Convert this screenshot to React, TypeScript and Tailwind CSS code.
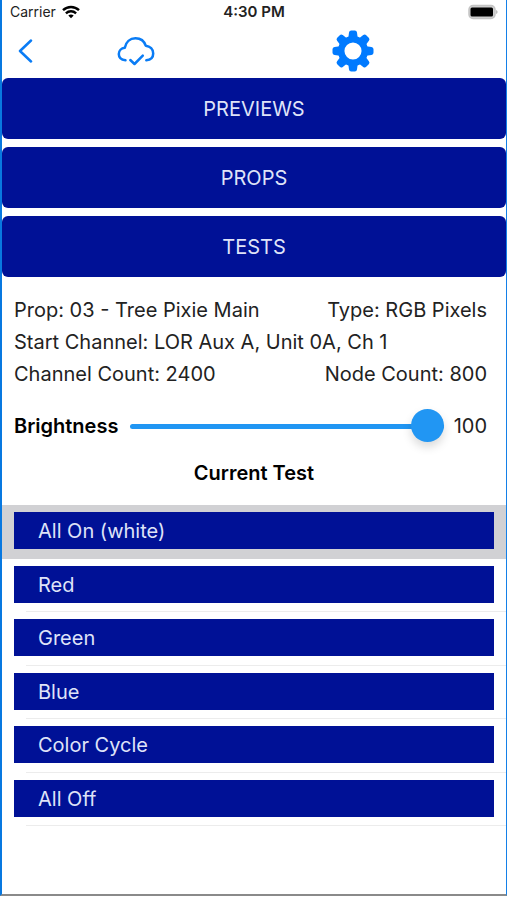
import { useState } from "react";

const menu = ["PREVIEWS", "PROPS", "TESTS"];
const tests = ["All On (white)", "Red", "Green", "Blue", "Color Cycle", "All Off"];

function StatusBar() {
  return (
    <div className="grid h-6 grid-cols-3 items-center pr-2 pl-2 text-[#222]">
      <div className="flex items-center gap-1.5 text-sm">
        Carrier
        <svg viewBox="0 0 18 14" className="h-3.5 w-[18px]" fill="none" stroke="#000" strokeWidth="2.4" aria-hidden="true">
          <path d="M1 5.2C5.500.9 12.500.9 17 5.200" />
          <path d="M3.900 8.300c2.900-2.700 7.300-2.700 10.200 0" />
          <path d="M6.300 10.500c1.600-1.500 3.800-1.500 5.400 0L9 13.300z" fill="#000" stroke="none" />
        </svg>
      </div>
      <div className="text-center text-[15px] font-semibold">4:30 PM</div>
      <svg viewBox="0 0 30 16" className="h-4 w-[30px] justify-self-end" aria-hidden="true">
        <rect x="1" y="1.500" width="26" height="13" rx="4" fill="#d0d0d0" stroke="#c4c4c4" strokeWidth="1.500" />
        <rect x="2.500" y="3.500" width="22.500" height="9" rx="1.500" fill="#000" />
        <path d="M28.200 6v4c1.800-.8 1.800-3.200 0-4z" fill="#b0b0b0" />
      </svg>
    </div>
  );
}

function CloudCheckIcon() {
  return (
    <svg viewBox="0 0 38 30" className="h-[30px] w-[38px]" fill="none" stroke="currentColor" strokeWidth="2.500" strokeLinecap="round" strokeLinejoin="round" aria-hidden="true">
      <path d="M8.500 24.300C4.500 23.800 1.800 21.500 1.800 18c0-3.400 2.500-5.800 6-6.200C8.800 6 13 2.200 18.500 2.200c5 0 8.800 2.900 10.200 7.500 4.500.5 7.500 3.600 7.500 7.700 0 3.800-2.700 6.400-6.900 6.900" />
      <path d="M13.300 24l4.200 4 8.300-8.300" />
    </svg>
  );
}

function GearIcon() {
  return (
    <svg viewBox="-21 -21 42 42" className="size-[42px]" fill="currentColor" aria-hidden="true">
      {[0, 45, 90, 135].map((angle) => (
        <path
          key={angle}
          transform={`rotate(${angle})`}
          d="M-4-18.500Q-3.700-20.500-1.800-20.500H1.800Q3.700-20.500 4-18.500L4.700-13H-4.700zM-4 18.500Q-3.700 20.500-1.800 20.500H1.800Q3.700 20.500 4 18.500L4.700 13H-4.700z"
        />
      ))}
      <circle r="11.800" fill="none" stroke="currentColor" strokeWidth="6.500" />
    </svg>
  );
}

export default function App() {
  const [brightness, setBrightness] = useState(100);
  const [current, setCurrent] = useState(tests[0]);

  return (
    <div className="min-h-screen bg-white pb-1 font-['Inter','Liberation_Sans',sans-serif] text-[#222]">
      <main className="border-r border-b-2 border-l-2 border-r-[#1480e8] border-b-[#8a8a8a] border-l-[#0878e0] pb-17">
        <StatusBar />

        <header className="grid h-[53px] grid-cols-[15px_1fr_1fr_1fr] items-center pl-4 text-[#0a7cf5]">
          <button type="button" aria-label="Back">
            <svg viewBox="0 0 15 24" className="h-6 w-[15px]" fill="none" stroke="currentColor" strokeWidth="2.500" strokeLinecap="round" strokeLinejoin="round" aria-hidden="true">
              <path d="M13 1.500L2 12l11 10.500" />
            </svg>
          </button>
          <button type="button" aria-label="Sync" className="ml-12 justify-self-center">
            <CloudCheckIcon />
          </button>
          <button type="button" aria-label="Settings" className="col-start-3 col-end-5 ml-2.5 justify-self-center text-[#007aff]">
            <GearIcon />
          </button>
        </header>

        <nav className="mt-px flex flex-col gap-2">
          {menu.map((item) => (
            <button key={item} type="button" className="h-[61px] rounded-md bg-[#001196] text-xl text-[#dfe3f8]">
              {item}
            </button>
          ))}
        </nav>

        <section className="mt-[17px] pr-[19px] pl-3 text-xl leading-8">
          <div className="flex justify-between">
            <p>Prop: 03 - Tree Pixie Main</p>
            <p>Type: RGB Pixels</p>
          </div>
          <p>Start Channel: LOR Aux A, Unit 0A, Ch 1</p>
          <div className="flex justify-between">
            <p>Channel Count: 2400</p>
            <p>Node Count: 800</p>
          </div>
        </section>

        <div className="mt-5 flex h-8 items-center pr-[19px] pl-3 text-xl">
          <label htmlFor="brightness" className="font-semibold text-black">Brightness</label>
          <input
            id="brightness"
            type="range"
            min={0}
            max={100}
            value={brightness}
            onChange={(e) => setBrightness(Number(e.target.value))}
            className="mr-2.5 ml-3 h-8 min-w-0 flex-1 appearance-none bg-transparent [&::-webkit-slider-runnable-track]:h-[5px] [&::-webkit-slider-runnable-track]:rounded-full [&::-webkit-slider-runnable-track]:bg-[#2196f3] [&::-webkit-slider-thumb]:-mt-[15px] [&::-webkit-slider-thumb]:size-[33px] [&::-webkit-slider-thumb]:appearance-none [&::-webkit-slider-thumb]:rounded-full [&::-webkit-slider-thumb]:bg-[#2196f3] [&::-webkit-slider-thumb]:shadow-[0_5px_10px_rgba(0,0,0,0.15)]"
          />
          <output htmlFor="brightness">{brightness}</output>
        </div>

        <h2 className="mt-[15px] text-center text-xl leading-8 font-semibold text-black">Current Test</h2>

        <ul className="mt-4">
          {tests.map((test) => (
            <li
              key={test}
              className={
                test === current
                  ? "bg-[#d1d1d4] pt-[7px] pr-3 pl-3 odd:h-[54px] even:h-[53px]"
                  : "relative pt-[7px] pr-3 pl-3 odd:h-[54px] even:h-[53px] after:absolute after:right-0 after:bottom-0 after:left-6 after:h-px after:bg-[#ececec]"
              }
            >
              <button
                type="button"
                onClick={() => setCurrent(test)}
                className="h-[37px] w-full bg-[#001196] pl-6 text-left text-xl text-[#dfe3f8]"
              >
                {test}
              </button>
            </li>
          ))}
        </ul>
      </main>
    </div>
  );
}
